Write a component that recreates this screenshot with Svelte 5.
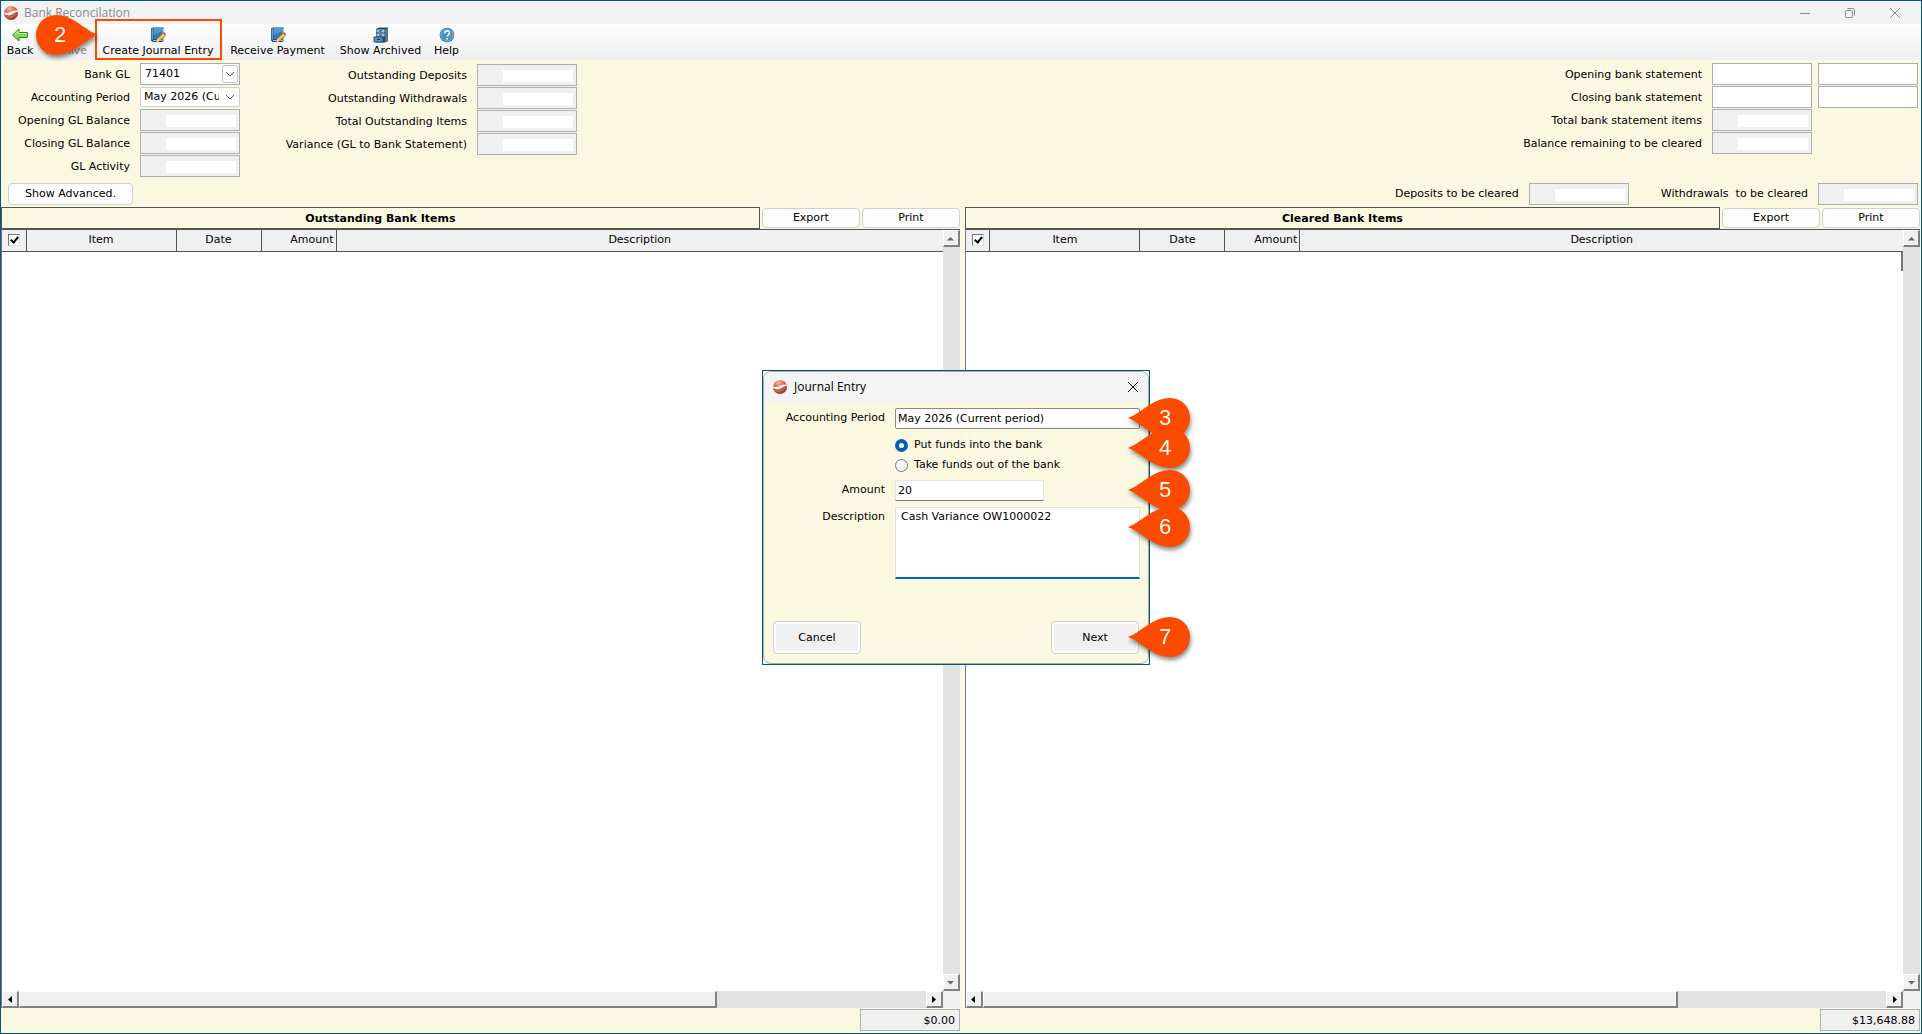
<script lang="ts">
	import { onMount } from 'svelte';

	let bankGl = $state('71401');
	let period = $state('May 2026 (Current period)');
	let entryPeriod = $state('May 2026 (Current period)');
	let direction = $state('in');
	let amount = $state('20');
	let description = $state('Cash Variance OW1000022');
	let noteBox: HTMLTextAreaElement;

	const periods = ['May 2026 (Current period)'];

	const balances = [
		{ id: 'opening-gl', label: 'Opening GL Balance' },
		{ id: 'closing-gl', label: 'Closing GL Balance' },
		{ id: 'gl-activity', label: 'GL Activity' }
	];

	const outstanding = [
		{ id: 'out-deposits', label: 'Outstanding Deposits' },
		{ id: 'out-withdrawals', label: 'Outstanding Withdrawals' },
		{ id: 'out-total', label: 'Total Outstanding Items' },
		{ id: 'variance', label: 'Variance (GL to Bank Statement)' }
	];

	const panes = [
		{ id: 'outstanding', title: 'Outstanding Bank Items', total: '$0.00' },
		{ id: 'cleared', title: 'Cleared Bank Items', total: '$13,648.88' }
	];

	onMount(() => {
		noteBox.focus();
		noteBox.setSelectionRange(description.length, description.length);
	});
</script>

{#snippet logo()}
	<svg class="logo" width="16" height="16" viewBox="0 0 16 16" aria-hidden="true">
		<defs>
			<radialGradient id="ball" cx="0.4" cy="0.2" r="0.85">
				<stop offset="0" stop-color="#f3b3a4" />
				<stop offset="0.5" stop-color="#d4604c" />
				<stop offset="1" stop-color="#94281b" />
			</radialGradient>
		</defs>
		<circle cx="8" cy="8" r="7" fill="url(#ball)" />
		<path d="M0 6.500C2 8.500 5 8.400 8 7S13 4.800 15.600 6.800C13 6.500 11.500 7.800 9 9.200S2 11.300 0 6.500Z" fill="#fff" />
		<path d="M3 11.500C6 13 10 12 12.500 9.500" fill="none" stroke="#e88c7b" stroke-width=".7" />
	</svg>
{/snippet}

{#snippet bookIcon()}
	<svg width="16" height="16" viewBox="0 0 16 16" aria-hidden="true">
		<path d="M1 1.500L3 .5h10.500v13.500L12 15H3L1 13.500Z" fill="#143f63" />
		<path d="M3.500 1h9v11.500h-9Z" fill="#2f7ab3" />
		<path d="M3.500 1h9v3L3.500 8Z" fill="#4e9bd0" />
		<path d="M1.500 1.700L3 1v11.500l-1.500.7Z" fill="#5ba3d3" />
		<path d="M3 13.500h9.500l.5-.5V2" fill="none" stroke="#e3ecf2" stroke-width=".8" />
		<path d="M6.500 15l.9-3.300L13.200 6l2.200 2.200L9.600 14Z" fill="#f6cd3d" stroke="#7d6018" stroke-width=".7" />
		<path d="M13.200 6l1-.9 2 2-.8 1.100Z" fill="#d9584b" />
		<path d="M6.500 15l.9-3.300L9.600 14Z" fill="#f6e3bc" />
	</svg>
{/snippet}

{#snippet pin(n: number)}
	<span class="pin">
		<svg width="64" height="42" viewBox="0 0 64 42" aria-hidden="true">
			<path d="M0 21C12 17 25 1 42 1a20 20 0 0 1 0 40C25 41 12 25 0 21Z" fill="#fa4b00" />
		</svg>
		<b>{n}</b>
	</span>
{/snippet}

{#snippet arrow(dir: string)}
	<button class="arrow" class:vert={dir === 'up' || dir === 'down'} aria-label="Scroll {dir}">
		<svg width="9" height="9" viewBox="0 0 9 9" aria-hidden="true">
			{#if dir === 'up'}
				<path d="M1 6.500h7L4.500 3Z" />
			{:else if dir === 'down'}
				<path d="M1 3h7L4.500 6.500Z" />
			{:else if dir === 'left'}
				<path d="M6 1v7L2 4.500Z" />
			{:else}
				<path d="M3 1v7l4-3.500Z" />
			{/if}
		</svg>
	</button>
{/snippet}

{#snippet masked(id: string)}
	<span class="masked">
		<input {id} type="text" readonly />
		<span class="mask"></span>
	</span>
{/snippet}

<div class="window">
	<header class="titlebar">
		{@render logo()}
		<span class="caption">Bank Reconcilation</span>
		<div class="win-buttons">
			<button aria-label="Minimize">
				<svg width="12" height="12" viewBox="0 0 12 12"><path d="M1 6.500h10" /></svg>
			</button>
			<button aria-label="Restore">
				<svg width="12" height="12" viewBox="0 0 12 12">
					<rect x="1.500" y="3.500" width="7" height="7" rx="1" />
					<path d="M3.500 1.500h5a2 2 0 0 1 2 2v5" />
				</svg>
			</button>
			<button aria-label="Close">
				<svg width="12" height="12" viewBox="0 0 12 12"><path d="M1 1l10 10M11 1L1 11" /></svg>
			</button>
		</div>
	</header>

	<nav class="toolbar">
		<button class="tool">
			<svg width="16" height="16" viewBox="0 0 16 16" aria-hidden="true">
				<path d="M.6 8L7 2v3.500h8.400v5H7V14Z" fill="#7ed957" stroke="#2f8a22" stroke-width="1" />
				<path d="M2.500 7.500L6 4.200v2.300h8.400" fill="none" stroke="#c9f5b0" />
			</svg>
			Back
		</button>
		<button class="tool archive" disabled>
			<span class="icon-gap"></span>
			Archive
		</button>
		<button class="tool marked">
			{@render bookIcon()}
			Create Journal Entry
			{@render pin(2)}
		</button>
		<button class="tool">
			{@render bookIcon()}
			Receive Payment
		</button>
		<button class="tool">
			<svg width="16" height="16" viewBox="0 0 16 16" aria-hidden="true">
				<path d="M3 2l3-1.500h9V14l-3 1.500H3Z" fill="#27465e" />
				<path d="M12 2.500L15 1v12.500l-3 1.500Z" fill="#5b7388" />
				<path d="M3.500 2.500h8v3h-8ZM3.500 6.500h8v3h-8Z" fill="#9cc8e6" />
				<path d="M1 10h9v5H1Z" fill="#4c93cb" stroke="#1c3c58" stroke-width=".8" />
				<path d="M6 4h3M6 8h3M4 12.500h3" stroke="#173651" />
			</svg>
			Show Archived
		</button>
		<button class="tool">
			<svg width="16" height="16" viewBox="0 0 16 16" aria-hidden="true">
				<circle cx="8" cy="8" r="7.300" fill="#2c6796" />
				<circle cx="8" cy="8" r="6.200" fill="#4d91c4" stroke="#a9cde5" stroke-width=".7" />
				<path d="M5.600 6.200C5.600 3.200 10.500 3.200 10.500 6c0 1.800-2.300 1.900-2.300 3.600M8.200 11v1.600" fill="none" stroke="#fff" stroke-width="1.600" />
			</svg>
			Help
		</button>
	</nav>

	<main>
		<section class="summary">
			<div class="fields left">
				<label for="bank-gl">Bank GL</label>
				<span class="combo">
					<select id="bank-gl" bind:value={bankGl}>
						<option>71401</option>
					</select>
					<span class="chevron boxed"><svg width="10" height="6" viewBox="0 0 10 6"><path d="M1 1l4 4 4-4" /></svg></span>
				</span>
				<label for="period">Accounting Period</label>
				<span class="combo soft">
					<select id="period" bind:value={period}>
						{#each periods as p}
							<option>{p}</option>
						{/each}
					</select>
					<span class="chevron"><svg width="10" height="6" viewBox="0 0 10 6"><path d="M1 1l4 4 4-4" /></svg></span>
				</span>
				{#each balances as row}
					<label for={row.id}>{row.label}</label>
					{@render masked(row.id)}
				{/each}
			</div>

			<div class="fields middle">
				{#each outstanding as row}
					<label for={row.id}>{row.label}</label>
					{@render masked(row.id)}
				{/each}
			</div>

			<div class="fields right">
				<label for="opening">Opening bank statement</label>
				<input id="opening" type="text" />
				<input type="text" aria-label="Opening bank statement date" />
				<label for="closing">Closing bank statement</label>
				<input id="closing" type="text" />
				<input type="text" aria-label="Closing bank statement date" />
				<label for="total-items">Total bank statement items</label>
				{@render masked('total-items')}
				<span></span>
				<label for="remaining">Balance remaining to be cleared</label>
				{@render masked('remaining')}
				<span></span>
			</div>
		</section>

		<section class="advanced">
			<button class="flat show">Show Advanced.</button>
			<div class="to-clear">
				<label for="dep-clear">Deposits to be cleared</label>
				{@render masked('dep-clear')}
				<label class="second" for="wd-clear">Withdrawals&nbsp; to be cleared</label>
				{@render masked('wd-clear')}
			</div>
		</section>

		<section class="panes">
			{#each panes as pane}
				<div class="pane">
					<div class="pane-head">
						<h2>{pane.title}</h2>
						<button class="flat">Export</button>
						<button class="flat">Print</button>
					</div>
					<div class="grid">
						<div class="sheet">
							<table>
								<thead>
									<tr>
										<th class="c-check">
											<input type="checkbox" checked aria-label="Select all {pane.id} items" />
										</th>
										<th class="c-item">Item</th>
										<th class="c-date">Date</th>
										<th class="c-amount">Amount</th>
										<th>Description</th>
									</tr>
								</thead>
								<tbody></tbody>
							</table>
							{#if pane.id === 'cleared'}
								<div class="row-end"></div>
							{/if}
						</div>
						<div class="vscroll">
							{@render arrow('up')}
							{@render arrow('down')}
						</div>
						<div class="hscroll">
							{@render arrow('left')}
							<div class="track"><div class="thumb"></div></div>
							{@render arrow('right')}
						</div>
						<div class="corner"></div>
					</div>
					<footer>
						<input type="text" readonly value={pane.total} aria-label="{pane.title} total" />
					</footer>
				</div>
			{/each}
		</section>
	</main>

	<div class="dialog-frame">
		<div class="dialog" role="dialog" aria-labelledby="dialog-title">
			<div class="dialog-title">
				{@render logo()}
				<span id="dialog-title">Journal Entry</span>
				<button aria-label="Close dialog">
					<svg width="12" height="12" viewBox="0 0 12 12"><path d="M1 1l10 10M11 1L1 11" /></svg>
				</button>
			</div>
			<div class="dialog-body">
				<div class="row">
					<label for="entry-period">Accounting Period</label>
					<select id="entry-period" bind:value={entryPeriod}>
						{#each periods as p}
							<option>{p}</option>
						{/each}
					</select>
					{@render pin(3)}
				</div>
				<div class="row radios">
					<span></span>
					<div class="options">
						<label><input type="radio" value="in" bind:group={direction} />Put funds into the bank</label>
						<label><input type="radio" value="out" bind:group={direction} />Take funds out of the bank</label>
					</div>
					{@render pin(4)}
				</div>
				<div class="row amount">
					<label for="amount">Amount</label>
					<input id="amount" type="text" bind:value={amount} />
					{@render pin(5)}
				</div>
				<div class="row note">
					<label for="description">Description</label>
					<textarea id="description" bind:this={noteBox} bind:value={description} spellcheck="false"></textarea>
					{@render pin(6)}
				</div>
				<div class="actions">
					<button>Cancel</button>
					<button>Next</button>
					{@render pin(7)}
				</div>
			</div>
		</div>
	</div>
</div>

<style>
	:global(body) {
		background: #fbf8e2;
	}

	.window {
		position: relative;
		box-sizing: border-box;
		display: flex;
		flex-direction: column;
		min-height: 100vh;
		border: 1px solid #005a7c;
		background: #fbf8e2;
		color: #000;
		font-family: Verdana, 'DejaVu Sans', sans-serif;
		font-size: 11px;
		line-height: 14px;
	}

	.window :is(button, input, select, textarea) {
		box-sizing: border-box;
		margin: 0;
		font: inherit;
		color: inherit;
		border-radius: 0;
		outline: none;
	}

	svg {
		display: block;
	}

	.titlebar {
		display: flex;
		align-items: center;
		height: 23px;
		padding: 0 4px 0 2px;
		background: #f2f2f2;
		color: #8b8b8b;
		font-family: 'Segoe UI', 'Open Sans', sans-serif;
		font-size: 12px;
	}

	.caption {
		flex: 1;
		padding-left: 5px;
	}

	.win-buttons {
		display: flex;
	}

	.win-buttons button {
		display: grid;
		place-items: center;
		width: 45px;
		height: 22px;
		padding: 0;
		border: none;
		background: none;
	}

	.win-buttons svg,
	.dialog-title button svg {
		fill: none;
		stroke: currentColor;
		stroke-width: 1;
	}

	.toolbar {
		display: grid;
		grid-template-columns: 38px 55px 128px 111px 95px 37px;
		height: 36px;
		background: linear-gradient(#fdfdfd, #f0f0f0);
	}

	.tool {
		position: relative;
		display: flex;
		flex-direction: column;
		align-items: center;
		gap: 1px;
		padding: 3px 0 0;
		border: none;
		background: none;
		white-space: nowrap;
	}

	.tool.archive {
		color: #8b8b8b;
	}

	.icon-gap {
		height: 16px;
	}

	.tool.marked::after {
		content: '';
		position: absolute;
		inset: -5px 0 0 1px;
		border: 2px solid #fa4b00;
	}

	.pin {
		position: absolute;
		z-index: 3;
		width: 64px;
		height: 42px;
		filter: drop-shadow(1px 3px 2px rgba(0, 0, 0, 0.45));
	}

	.pin b {
		position: absolute;
		top: 9px;
		left: 29px;
		width: 16px;
		color: #fff;
		font-family: 'Segoe UI', 'Liberation Sans', sans-serif;
		font-size: 22px;
		font-weight: normal;
		line-height: 24px;
		text-align: center;
	}

	.tool .pin {
		top: -10px;
		right: calc(100% - 4px);
	}

	.tool .pin svg {
		transform: scaleX(-1);
	}

	.tool .pin b {
		left: 18px;
	}

	main {
		flex: 1;
		display: flex;
		flex-direction: column;
	}

	.summary {
		display: flex;
		align-items: flex-start;
		padding: 3px 3px 0 0;
	}

	.fields {
		display: grid;
		grid-auto-rows: 22px;
		align-items: center;
		gap: 1px 10px;
	}

	.fields label {
		padding-top: 2px;
		text-align: right;
	}

	.fields.left {
		grid-template-columns: 129px 100px;
	}

	.fields.middle {
		grid-template-columns: 227px 100px;
		padding-top: 1px;
	}

	.fields.right {
		grid-template-columns: auto 100px 100px;
		column-gap: 6px;
		margin-left: auto;
	}

	.fields.right label {
		padding-right: 4px;
	}

	.fields input,
	.to-clear input,
	footer input {
		width: 100px;
		height: 22px;
		padding: 0 4px;
		border: 1px solid #abadb3;
		background: #fff;
	}

	.masked {
		position: relative;
		display: block;
		height: 22px;
	}

	.fields .masked input,
	.to-clear input,
	footer input {
		display: block;
		background: #f0f0f0;
	}

	.mask {
		position: absolute;
		top: 6px;
		right: 4px;
		width: 70px;
		height: 12px;
		background: #fff;
	}

	.combo {
		position: relative;
		display: block;
	}

	.combo select {
		display: block;
		width: 100px;
		height: 22px;
		padding: 0 20px 0 4px;
		border: 1px solid #abadb3;
		background: #fff;
		appearance: none;
	}

	.combo.soft select {
		height: 20px;
		padding: 0 20px 0 3px;
		border-color: #d0d0d0;
		border-radius: 2px;
	}

	.chevron {
		position: absolute;
		inset: 2px 2px 2px auto;
		display: grid;
		place-items: center;
		width: 16px;
		pointer-events: none;
	}

	.chevron.boxed {
		box-sizing: border-box;
		border: 1px solid #c4c4c4;
		border-radius: 2px;
	}

	.chevron path {
		fill: none;
		stroke: #555;
	}

	.advanced {
		display: flex;
		justify-content: space-between;
		align-items: center;
		padding: 6px 3px 2px 7px;
	}

	.to-clear {
		display: flex;
		align-items: center;
		gap: 10px;
	}

	.to-clear .second {
		padding-left: 22px;
	}

	.flat {
		width: 98px;
		height: 20px;
		padding: 0;
		border: 1px solid #d0d0d0;
		background: #fdfdfd;
	}

	.window button.flat {
		border-radius: 4px;
	}

	.flat.show {
		width: 125px;
		height: 22px;
	}

	.panes {
		flex: 1;
		display: grid;
		grid-template-columns: 501fr 499fr;
		gap: 5px;
		padding-right: 1px;
	}

	.pane {
		display: flex;
		flex-direction: column;
		min-width: 0;
	}

	.pane-head {
		display: flex;
		align-items: center;
		gap: 2px;
	}

	h2 {
		flex: 1;
		box-sizing: border-box;
		height: 22px;
		margin: 0;
		border: 1px solid #555;
		font-size: 11px;
		font-weight: bold;
		line-height: 22px;
		text-align: center;
	}

	.grid {
		flex: 1;
		display: grid;
		grid-template: 1fr 17px / 1fr 17px;
		border-top: 1px solid #555;
		border-left: 1px solid #777;
		background: #fff;
	}

	table {
		width: 100%;
		border-collapse: collapse;
		table-layout: fixed;
	}

	th {
		box-sizing: border-box;
		height: 21px;
		padding: 0 2px;
		border-right: 1px solid #555;
		border-bottom: 1px solid #555;
		background: #f0f0f0;
		font-weight: normal;
	}

	th:last-child {
		border-right: none;
	}

	.c-check {
		width: 24px;
	}

	.c-item {
		width: 150px;
	}

	.c-date {
		width: 85px;
	}

	.c-amount {
		width: 75px;
		text-align: right;
	}

	th input {
		display: block;
		appearance: none;
		width: 12px;
		height: 12px;
		border: 1px solid #777;
		border-right-color: #ddd;
		border-bottom-color: #ddd;
		background: #fff;
	}

	.window th input {
		margin: 0 auto;
	}

	th input:checked::after {
		content: '';
		display: block;
		width: 3px;
		height: 6px;
		margin: 0 0 0 3px;
		border: solid #000;
		border-width: 0 2px 2px 0;
		transform: rotate(40deg);
	}

	.row-end {
		width: 2px;
		height: 19px;
		margin-left: auto;
		background: #777;
	}

	.vscroll {
		display: flex;
		flex-direction: column;
		justify-content: space-between;
		background: #e2e2e2;
	}

	.hscroll {
		display: flex;
		background: #e2e2e2;
	}

	.track {
		flex: 1;
	}

	.thumb,
	.arrow {
		box-sizing: border-box;
		height: 17px;
		border: 1px solid #fff;
		border-right: 2px solid #808080;
		border-bottom: 2px solid #808080;
		background: #f0f0f0;
	}

	.thumb {
		width: 77%;
	}

	.arrow {
		display: grid;
		place-items: center;
		width: 17px;
		padding: 0;
	}

	.arrow.vert {
		fill: #666;
	}

	.corner {
		background: #f0f0f0;
	}

	footer {
		display: flex;
		justify-content: flex-end;
		padding: 1px 0 2px;
	}

	footer input {
		text-align: right;
	}

	.dialog-frame {
		position: absolute;
		z-index: 2;
		top: calc(50% - 147px);
		left: calc(50% - 199px);
		box-sizing: border-box;
		width: 388px;
		border: 1px solid #005a7c;
		background: #fff;
	}

	.dialog {
		border: 1px solid #a9a9a0;
		border-radius: 8px;
		background: #fbf8e2;
	}

	.dialog-title {
		display: flex;
		align-items: center;
		gap: 6px;
		height: 30px;
		padding: 0 8px;
		border-radius: 8px 8px 0 0;
		background: #f3f3f3;
		font-family: 'Segoe UI', 'Open Sans', sans-serif;
		font-size: 12px;
	}

	.dialog-title button {
		display: grid;
		place-items: center;
		width: 14px;
		height: 22px;
		margin-left: auto;
		padding: 0;
		border: none;
		background: none;
	}

	.dialog-title span {
		flex: 1;
	}

	.dialog-body {
		padding: 6px 8px 9px;
	}

	.row {
		position: relative;
		display: grid;
		grid-template-columns: 113px 245px;
		gap: 10px;
		align-items: start;
		margin-bottom: 9px;
	}

	.row.radios {
		margin-bottom: 8px;
	}

	.row > label {
		padding-top: 3px;
		text-align: right;
	}

	.row select {
		height: 21px;
		padding: 0 2px;
		border: 1px solid #888;
		background: #fff;
		appearance: none;
	}

	.window .row select {
		border-radius: 2px;
	}

	.row .pin,
	.actions .pin {
		top: calc(50% - 22px);
		left: 356px;
	}

	.row.radios .pin {
		top: -11px;
	}

	.row.note .pin {
		top: -1px;
	}

	.options {
		display: flex;
		flex-direction: column;
		gap: 6px;
	}

	.options label {
		display: flex;
		align-items: center;
		gap: 6px;
	}

	.options input {
		appearance: none;
		width: 13px;
		height: 13px;
		border: 1px solid #777;
		background: #f5f5f5;
	}

	.window .options input {
		border-radius: 50%;
	}

	.options input:checked {
		border: 4px solid #005fb8;
		background: #fff;
	}

	.amount input {
		width: 149px;
		height: 21px;
		padding: 0 2px;
		border: 1px solid #e5e5e5;
		border-bottom-color: #777;
		background: #fff;
	}

	.row.amount {
		margin-bottom: 6px;
	}

	.note textarea {
		display: block;
		height: 72px;
		padding: 2px 5px;
		border: 1px solid #e0e0e0;
		border-bottom: 2px solid #0067c0;
		background: #fff;
		resize: none;
	}

	.row.note {
		margin-bottom: 42px;
	}

	.actions {
		position: relative;
		display: flex;
		justify-content: space-between;
		padding: 0 1px;
	}

	.actions button {
		width: 88px;
		height: 33px;
		border: 1px solid #d0d0d0;
		background: #f0f0f0;
		box-shadow: inset 0 0 0 2px #fdfdfd;
	}

	.window .actions button {
		border-radius: 4px;
	}
</style>
